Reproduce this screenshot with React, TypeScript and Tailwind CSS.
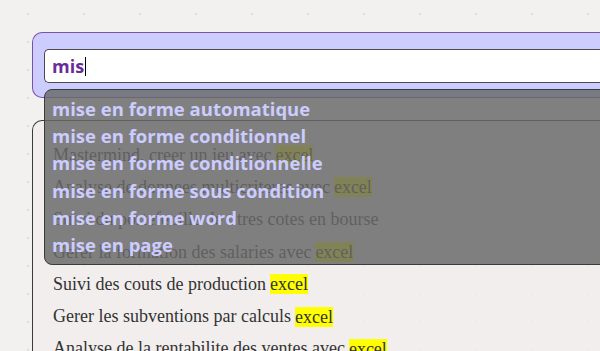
import React from "react";

const suggestions = [
  "mise en forme automatique",
  "mise en forme conditionnel",
  "mise en forme conditionnelle",
  "mise en forme sous condition",
  "mise en forme word",
  "mise en page",
];

const results = [
  "Mastermind, creer un jeu avec",
  "Analyse de donnees multicriteres avec",
  "Suivi du portefeuille de titres cotes en bourse",
  "Gerer la formation des salaries avec",
  "Suivi des couts de production",
  "Gerer les subventions par calculs",
  "Analyse de la rentabilite des ventes avec",
];

export default function App() {
  return (
    <div className="w-[600px] h-[351px] overflow-hidden bg-[#f3f1ef] bg-[radial-gradient(circle,#e3ddd9_1px,transparent_1.6px)] bg-[length:56px_28px] relative">
      <div className="pl-[32px] pt-[32px]">
        <div className="relative">
          <div className="h-[66px] rounded-l-[10px] border border-r-0 border-[#7b52ab] bg-[#ccccff] pl-[11px] pt-[16px]">
            <div className="h-[34px] rounded-l-[5px] border border-r-0 border-[#4a4a4a] bg-white flex items-center pl-[7px] font-['Open_Sans'] font-bold text-[18px] text-[#6a2c9a]">
              <span>mis</span>
              <span className="ml-[1px] inline-block w-px h-[19px] bg-black" />
            </div>
          </div>

          <div className="mt-[22px] rounded-tl-[10px] border border-r-0 border-b-0 border-[#3a3a3a] bg-[#f0eeec]/80 pl-[20px] pt-[18px] font-['Liberation_Serif'] text-[18px] text-[#333]">
            {results.map((r, i) => (
              <div key={i} className="h-[32.3px] flex items-center whitespace-nowrap">
                <span>{r}</span>
                {i !== 2 && (
                  <span className="ml-[4px] bg-[#ffff00] leading-[20px]">excel</span>
                )}
              </div>
            ))}
          </div>

          <div className="absolute left-[12px] top-[57px] w-[600px] h-[176px] rounded-[8px] border border-[#3c3c3c] bg-[rgba(105,105,105,0.83)] pl-[7px] pt-[5px] font-['Open_Sans'] font-bold text-[18.5px] text-[#ccccff]">
            {suggestions.map((s) => (
              <div key={s} className="h-[27.2px] leading-[27px] whitespace-nowrap">
                {s}
              </div>
            ))}
          </div>
        </div>
      </div>
    </div>
  );
}
